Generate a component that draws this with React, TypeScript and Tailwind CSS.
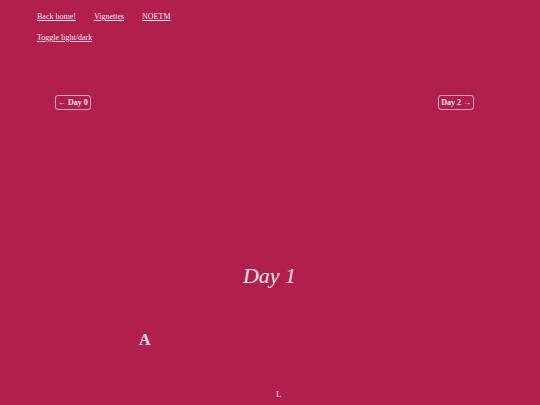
export default function App() {
  return (
    <div
      className="relative h-[405px] w-[540px] overflow-hidden bg-[#b11f4b] text-[#fde4ec]"
      style={{ fontFamily: '"Liberation Serif", Georgia, serif' }}
    >
      <nav className="flex gap-[18px] pl-[37px] pt-[11px] text-[8px] leading-[12px]">
        <a className="underline">Back home!</a>
        <a className="underline">Vignettes</a>
        <a className="underline">NOETM</a>
      </nav>
      <div className="pl-[37px] pt-[9px] text-[8px] leading-[12px]">
        <a className="underline">Toggle light/dark</a>
      </div>

      <div className="mt-[51px] flex justify-between pl-[55px] pr-[66px]">
        <span className="rounded-[3px] border border-[#f0a3bb] px-[2px] text-[8px] font-bold leading-[13px]">
          ← Day 0
        </span>
        <span className="rounded-[3px] border border-[#f0a3bb] px-[2px] text-[8px] font-bold leading-[13px]">
          Day 2 →
        </span>
      </div>

      <h1 className="mt-[152px] pr-[1px] text-center text-[22px] italic leading-[28px]">Day 1</h1>

      <div className="mt-[40px] pl-[139px] text-[16px] font-bold leading-[20px]">A</div>

      <div className="mt-[38px] pl-[276px] text-[9px] leading-[12px]">L</div>
    </div>
  );
}
